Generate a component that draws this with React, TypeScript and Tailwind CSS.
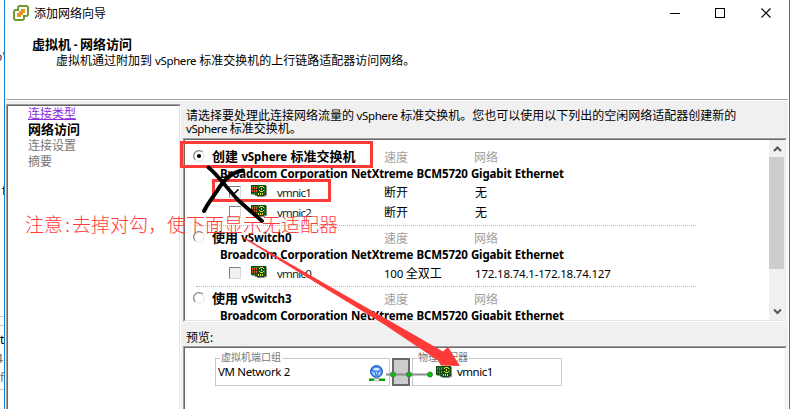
import type { ReactNode } from "react";

const FONT = "font-['Noto_Sans','Noto_Sans_CJK_SC',sans-serif]";

function L({ className = "tracking-[-0.25px]", children }: { className?: string; children: ReactNode }) {
  return <span className={`text-[11.5px] whitespace-pre ${className}`}>{children}</span>;
}

function NicIcon() {
  return (
    <svg width="16" height="13" viewBox="0 0 16 13" shapeRendering="crispEdges" className="block shrink-0">
      <path d="M1 1h14l1 1v9h-2v1H6v-1H4v-1H1z" fill="#8c8c8c" />
      <path d="M0 0h14l1 1v9h-2v1H6v-1H4V9H0z" fill="#0e4a12" />
      <path d="M1 1h12v1H1zM1 8h5v1H1zM13 2h1v6h-1z" fill="#1f7a1f" />
      <path d="M1 2h1v2H1zM3 2h1v2H3zM5 2h1v2H5zM1 5h1v2H1zM3 5h1v2H3zM5 5h1v2H5z" fill="#f0562a" />
      <path d="M9 1h3v1H9zM8 2h1v1H8zM12 2h1v1h-1zM8 5h1v1H8zM12 5h1v1h-1zM9 6h3v1H9zM10 3h1v2h-1z" fill="#e8dc2c" />
      <path d="M7 8h1v2H7zM9 8h1v2H9zM11 8h1v2h-1z" fill="#e8dc2c" />
    </svg>
  );
}

function Radio({ checked = false }: { checked?: boolean }) {
  return (
    <svg width="12" height="12" viewBox="0 0 12 12" className="block shrink-0">
      <circle cx="6" cy="6" r="5.2" fill="#fff" stroke="#e3e3e3" />
      <path d="M2.2 9.8A5.3 5.3 0 0 1 9.8 2.2" fill="none" stroke="#858585" strokeWidth="1.2" />
      {checked && <circle cx="6" cy="6" r="2.1" fill="#000" />}
    </svg>
  );
}

function Check({ checked = false, disabled = false }: { checked?: boolean; disabled?: boolean }) {
  return (
    <span
      className={`flex h-3 w-3 shrink-0 items-center justify-center border-t border-l border-r border-b border-t-[#808080] border-l-[#808080] border-r-[#d8d8d8] border-b-[#d8d8d8] ${
        disabled ? "bg-[#f0f0f0]" : "bg-white"
      }`}
    >
      {checked && (
        <svg width="8" height="8" viewBox="0 0 8 8">
          <path d="M0.5 3.5 3 6 7.5 1.2" fill="none" stroke="#000" strokeWidth="1.5" />
        </svg>
      )}
    </span>
  );
}

function GroupHeader({ label, checked }: { label: ReactNode; checked?: boolean }) {
  return (
    <div className="flex h-[18px] items-center pl-2">
      <div className="-mt-0.5">
        <Radio checked={checked} />
      </div>
      <div className="-mt-0.5 ml-[7px] w-[172px] text-[13px] leading-4 font-bold">{label}</div>
      <div className="w-[90px] pt-0.5 text-[#a0a0a0]">速度</div>
      <div className="pt-0.5 text-[#a0a0a0]">网络</div>
    </div>
  );
}

function Vendor() {
  return (
    <div className="h-4 pl-[35px] leading-4 font-bold">
      <L className="tracking-[-0.15px] [word-spacing:0.4px]">Broadcom Corporation NetXtreme BCM5720 Gigabit Ethernet</L>
    </div>
  );
}

function NicRow({ name, speed, net, checked, disabled }: { name: string; speed: ReactNode; net: ReactNode; checked?: boolean; disabled?: boolean }) {
  return (
    <div className="flex h-5 items-center pl-11">
      <Check checked={checked} disabled={disabled} />
      <div className="-mt-0.5 ml-[10px]">
        <NicIcon />
      </div>
      <div className="ml-[10px] w-[107px] pt-0.5 text-[#222]">
        <L className="tracking-[-0.8px]">{name}</L>
      </div>
      <div className="w-[91px] pt-0.5">{speed}</div>
      <div className="pt-0.5">{net}</div>
    </div>
  );
}

function Divider() {
  return <div className="my-[3px] ml-[11px] w-[500px] border-t border-dotted border-[#b4b4b4]" />;
}

function Sunken({ className, children }: { className: string; children?: ReactNode }) {
  return (
    <div className={`border border-t-[#a0a0a0] border-l-[#a0a0a0] border-r-white border-b-white ${className}`}>
      <div className="h-full border border-t-[#696969] border-l-[#696969] border-r-[#e3e3e3] border-b-[#e3e3e3] bg-white">
        {children}
      </div>
    </div>
  );
}

function BackgroundStrip() {
  return (
    <div className="flex h-[409px] w-1 shrink-0 flex-col overflow-hidden bg-white text-[12px] leading-4">
      <div className="mt-[49px] -ml-[5px] h-4 text-[#3a3a66]">o"</div>
      <div className="mt-[118px] ml-0.5 h-4">f</div>
      <div className="mt-[117px] h-px bg-[#c8c8c8]" />
      <div className="mt-2 h-px bg-[#c8c8c8]" />
      <div className="mt-[6px] h-4">t</div>
      <div className="mt-[3px] -ml-1 h-4 text-[#666]">4</div>
      <div className="mt-[3px] h-4 text-[#777]">f</div>
      <div className="mt-[3px] h-px bg-[#c8c8c8]" />
    </div>
  );
}

function TitleBar() {
  return (
    <div className="flex h-7 items-center pl-[7px]">
      <svg width="16" height="16" viewBox="0 0 16 16" className="-mt-0.5">
        <rect x="5" y="1" width="10" height="10" rx="2" fill="#fff" stroke="#6a9d2a" strokeWidth="2" />
        <rect x="1" y="5" width="10" height="10" rx="2" fill="#fff" stroke="#6a9d2a" strokeWidth="2" />
        <path d="M6 2.5h8v7.5h-4v4H2.500V6H6z" fill="#fff" />
        <path d="M8 4h4v4h-2v2H8v2H4V8h2V6h2z" fill="#e8971e" />
      </svg>
      <span className="ml-[5px]">添加网络向导</span>
      <svg width="104" height="12" viewBox="0 0 104 12" className="-mt-0.5 ml-[564px]" fill="none" stroke="#000">
        <path d="M0 6.500H10" />
        <rect x="45.500" y="1.500" width="9" height="9" />
        <path d="M91.500 1.500 100.500 10.500M100.500 1.500 91.500 10.500" strokeWidth="1.2" />
      </svg>
    </div>
  );
}

function GroupBox({ title, className, children }: { title: string; className: string; children: ReactNode }) {
  return (
    <div className={`relative flex h-7 items-center border border-[#c8c8c8] bg-white ${className}`}>
      <span className="absolute -top-[8px] left-[4px] bg-white px-px text-[10px] leading-3 whitespace-nowrap text-[#777]">{title}</span>
      {children}
    </div>
  );
}

function Preview() {
  return (
    <div className="relative flex gap-0.5 pt-[10px] pl-[30px]">
      <GroupBox title="虚拟机端口组" className="w-[175px] pl-0.5">
        <L className="tracking-[-0.35px]">VM Network 2</L>
        <svg width="17" height="17" viewBox="0 0 17 17" className="mt-0.5 ml-auto mr-[3px] block">
          <circle cx="7.500" cy="6.500" r="6" fill="#3f86ee" stroke="#2459b8" />
          <path d="M4 4.500C4.500 2 10.500 2 11 4.500 9.500 6 5.500 6 4 4.500z" fill="#dbecff" />
          <path d="M2.500 6.500 5 7l1.500 4-2-1zM12.500 6.500 10 7l-1.500 4 2-1zM6.500 7h2l-1 3z" fill="#b5d6ff" />
          <path d="M6.500 12.500h2v1h-2z" fill="#999" />
          <path d="M0 13.500h16V16H0z" fill="#00a000" />
          <path d="M5 13.500h5V16H5z" fill="#e8e8e8" stroke="#999" strokeWidth="0.500" />
        </svg>
      </GroupBox>
      <div className="h-7 w-[18px] border-2 border-[#696969] bg-[#ccc]" />
      <GroupBox title="物理适配器" className="w-[150px] pl-[23px]">
        <NicIcon />
        <L className="ml-[5px] tracking-[-0.5px]">vmnic1</L>
      </GroupBox>
      <svg width="50" height="7" viewBox="0 0 50 7" className="absolute top-[23px] left-[200px]">
        <path d="M1 3.500H45" stroke="#8c8c8c" strokeWidth="2" />
        <g fill="#00c400" stroke="#4c704c" strokeWidth="0.800">
          <circle cx="8" cy="3.500" r="2.600" />
          <circle cx="24" cy="3.500" r="2.600" />
          <circle cx="45" cy="3.500" r="2.600" />
        </g>
      </svg>
    </div>
  );
}

function Annotations() {
  return (
    <div className="pointer-events-none absolute inset-0">
      <div className="absolute top-[141px] left-[180px] h-[27px] w-[193px] border-[3px] border-[#fd3a38]" />
      <div className="absolute top-[179px] left-[212px] h-[23px] w-[119px] border-[3px] border-[#fd3a38]" />
      <div className="absolute top-[212px] left-[25px] font-['Noto_Sans_CJK_SC',sans-serif] text-[19px] leading-6 font-light whitespace-nowrap text-[#ff3c3c]">
        注意<span className="inline-block w-[9px] text-center">:</span>去掉对勾，使下面显示无适配器
      </div>
      <svg width="796" height="409" className="absolute inset-0">
        <path d="M208.500 167.500C217 174 226 187 238 200C248 209 255 215 262 221" fill="none" stroke="#000" strokeWidth="3.800" strokeLinecap="round" />
        <path d="M243 170.500C233 172 224 179 217 191C211 200 208 203 204 211" fill="none" stroke="#000" strokeWidth="4" strokeLinecap="round" />
        <path d="M242 237.500 244.500 237.500 443 351.500 448 347 460 366 441 365.500 438 360.500 385 325Z" fill="#fd3a38" />
      </svg>
    </div>
  );
}

export default function App() {
  return (
    <div className={`relative flex h-[409px] w-[796px] overflow-hidden bg-white text-[12px] leading-4 whitespace-nowrap text-black ${FONT}`}>
      <BackgroundStrip />
      <div className="flex h-full w-[786px] flex-col border-x border-[#1a7fd0] px-px">
        <div className="h-[100px] shrink-0 border-b border-[#a0a0a0]">
          <TitleBar />
          <div className="mt-2 pl-[26px] text-[13px] leading-4 font-bold">
            虚拟机<L> - </L>网络访问
          </div>
          <div className="pl-[50px]">
            虚拟机通过附加到<L className="tracking-[-0.4px] [word-spacing:0.5px]"> vSphere </L>标准交换机的上行链路适配器访问网络。
          </div>
        </div>
        <div className="mt-px flex h-[308px] bg-[#f0f0f0] pt-[3px]">
          <Sunken className="-mb-1 w-[175px] shrink-0">
            <div className="flex flex-col pl-5">
              <span className="text-[#8a2be2] underline">连接类型</span>
              <span className="-mt-px mb-px text-[13px] font-bold">网络访问</span>
              <span className="text-[#777]">连接设置</span>
              <span className="text-[#777]">摘要</span>
            </div>
          </Sunken>
          <div className="ml-0.5 flex w-[604px] flex-col">
            <div className="h-[34px] pt-[5px] pl-[3px] leading-[13px]">
              请选择要处理此连接网络流量的<L className="tracking-[-0.4px]"> vSphere </L>
              标准交换机。您也可以使用以下列出的空闲网络适配器创建新的
              <br />
              <L className="tracking-[-0.4px]">vSphere </L>标准交换机。
            </div>
            <Sunken className="h-[184px] shrink-0">
              <div className="flex h-full overflow-hidden">
                <div className="w-[584px] pt-2">
                  <GroupHeader
                    label={
                      <>
                        创建<L className="tracking-[-0.1px] [word-spacing:0.5px]"> vSphere </L>标准交换机
                      </>
                    }
                    checked
                  />
                  <Vendor />
                  <NicRow name="vmnic1" speed="断开" net="无" checked />
                  <NicRow name="vmnic2" speed="断开" net="无" />
                  <Divider />
                  <GroupHeader
                    label={
                      <>
                        使用<L className="tracking-[-0.15px] [word-spacing:0.5px]"> vSwitch0</L>
                      </>
                    }
                  />
                  <Vendor />
                  <NicRow
                    name="vmnic0"
                    speed={
                      <>
                        <L>100 </L>全双工
                      </>
                    }
                    net={<L className="tracking-[-0.2px]">172.18.74.1-172.18.74.127</L>}
                    disabled
                  />
                  <Divider />
                  <GroupHeader
                    label={
                      <>
                        使用<L className="tracking-[-0.15px] [word-spacing:0.5px]"> vSwitch3</L>
                      </>
                    }
                  />
                  <Vendor />
                </div>
                <div className="flex w-4 flex-col items-center bg-[#f0f0f0]">
                  <svg width="9" height="17" viewBox="0 0 9 17" fill="none" stroke="#555" strokeWidth="2">
                    <path d="M1 11 4.500 7.500 8 11" />
                  </svg>
                  <div className="mr-px h-[112px] w-[15px] bg-[#cdcdcd]" />
                  <svg width="9" height="17" viewBox="0 0 9 17" className="mt-auto" fill="none" stroke="#555" strokeWidth="2">
                    <path d="M1 6.500 4.500 10 8 6.500" />
                  </svg>
                </div>
              </div>
            </Sunken>
            <div className="h-6 pt-2 pl-[3px]">预览:</div>
            <Sunken className="-mb-1 h-[67px] shrink-0">
              <Preview />
            </Sunken>
          </div>
        </div>
      </div>
      <Annotations />
    </div>
  );
}
